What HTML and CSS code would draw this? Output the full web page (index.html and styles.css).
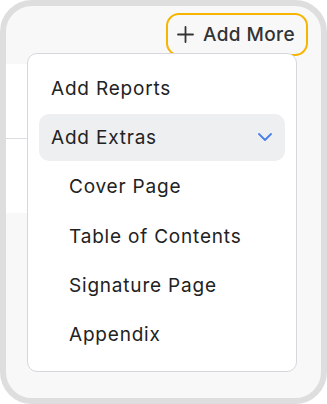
FILE: index.html
```html
<!DOCTYPE html>
<html lang="en">
<head>
  <meta charset="UTF-8">
  <meta name="viewport" content="width=device-width, initial-scale=1">
  <title>Add More</title>
  <link rel="stylesheet" href="styles.css">
</head>
<body>
  <div class="frame">
    <div class="toolbar">
      <button class="add-more">
        <svg class="plus" width="17" height="17" viewBox="0 0 17 17">
          <path d="M8.5 1v15M1 8.5h15" fill="none" stroke="#333" stroke-width="1.8" stroke-linecap="round"/>
        </svg>
        <span>Add More</span>
      </button>
    </div>
    <div class="backdrop">
      <div class="backdrop-row"></div>
      <div class="backdrop-row"></div>
    </div>

    <div class="menu">
      <div class="menu-item">Add Reports</div>
      <div class="menu-item active">
        <span>Add Extras</span>
        <svg class="chevron" width="14" height="8" viewBox="0 0 14 8">
          <path d="M1 1l6 6 6-6" fill="none" stroke="#4a80e8" stroke-width="1.8" stroke-linecap="round" stroke-linejoin="round"/>
        </svg>
      </div>
      <div class="menu-item sub">Cover Page</div>
      <div class="menu-item sub">Table of Contents</div>
      <div class="menu-item sub">Signature Page</div>
      <div class="menu-item sub">Appendix</div>
    </div>
  </div>
</body>
</html>
```

FILE: styles.css
```css
body { margin: 0; background: #fff; font-family: Inter, "Noto Sans", sans-serif; color: #222; }
.frame { position: relative; box-sizing: border-box; width: 327px; height: 404px; border: 6px solid #dedede; border-radius: 32px; background: #f8f8f8; overflow: hidden; }
.toolbar { display: flex; justify-content: flex-end; padding: 7px 13px 0 0; height: 45px; }
.add-more { display: flex; align-items: center; gap: 9px; box-sizing: border-box; height: 43px; padding: 0 11px 0 9px; border: 2px solid #f7b500; border-radius: 13px; background: #f8f8f8; font-family: inherit; font-size: 19px; font-weight: 500; letter-spacing: 0.4px; color: #333; cursor: pointer; }
.backdrop { width: 200px; margin-top: 6px; background: #fff; }
.backdrop-row { height: 74px; border-bottom: 1px solid #dcdce2; }
.backdrop-row:last-child { border-bottom: none; }
.menu { position: absolute; left: 21px; top: 47px; width: 270px; height: 319px; box-sizing: border-box; padding: 10.5px 11px; display: flex; flex-direction: column; gap: 2.4px; background: #fff; border: 1px solid #d6d6de; border-radius: 10px; }
.menu-item { display: flex; align-items: center; justify-content: space-between; height: 47px; padding: 0 13px 0 12px; border-radius: 10px; font-size: 19px; letter-spacing: 0.8px; flex-shrink: 0; }
.menu-item.active { background: #eeeff1; }
.menu-item.sub { padding-left: 30px; }
```
